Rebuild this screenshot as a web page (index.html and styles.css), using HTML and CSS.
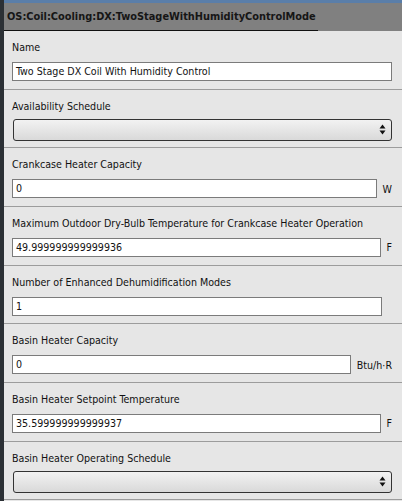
FILE: index.html
```html
<!DOCTYPE html>
<html>
<head>
<meta charset="utf-8">
<link rel="stylesheet" href="styles.css">
</head>
<body>
<div class="app">
  <div class="side"></div>
  <div class="main">
    <div class="topbar"></div>
    <div class="header"><span class="title">OS:Coil:Cooling:DX:TwoStageWithHumidityControlMode</span></div>
    <div class="field">
      <div class="label">Name</div>
      <div class="row"><div class="input">Two Stage DX Coil With Humidity Control</div></div>
    </div>
    <div class="field sel">
      <div class="label">Availability Schedule</div>
      <div class="row"><div class="select"><span class="arrows"><svg width="7" height="11" viewBox="0 0 7 11"><path d="M3.5 0.5 L6.5 4.5 L0.5 4.5 Z M0.5 6.5 L6.5 6.5 L3.5 10.5 Z" fill="#111"/></svg></span></div></div>
    </div>
    <div class="field">
      <div class="label">Crankcase Heater Capacity</div>
      <div class="row"><div class="input">0</div><span class="unit">W</span></div>
    </div>
    <div class="field">
      <div class="label">Maximum Outdoor Dry-Bulb Temperature for Crankcase Heater Operation</div>
      <div class="row"><div class="input">49.999999999999936</div><span class="unit">F</span></div>
    </div>
    <div class="field">
      <div class="label">Number of Enhanced Dehumidification Modes</div>
      <div class="row"><div class="input short">1</div></div>
    </div>
    <div class="field">
      <div class="label">Basin Heater Capacity</div>
      <div class="row"><div class="input">0</div><span class="unit">Btu/h·R</span></div>
    </div>
    <div class="field">
      <div class="label">Basin Heater Setpoint Temperature</div>
      <div class="row"><div class="input">35.599999999999937</div><span class="unit">F</span></div>
    </div>
    <div class="field sel">
      <div class="label">Basin Heater Operating Schedule</div>
      <div class="row"><div class="select"><span class="arrows"><svg width="7" height="11" viewBox="0 0 7 11"><path d="M3.5 0.5 L6.5 4.5 L0.5 4.5 Z M0.5 6.5 L6.5 6.5 L3.5 10.5 Z" fill="#111"/></svg></span></div></div>
    </div>
  </div>
</div>
</body>
</html>
```
FILE: styles.css
```css
html, body {
  margin: 0;
  padding: 0;
}
body {
  width: 402px;
  height: 501px;
  overflow: hidden;
  background: #e6e6e6;
  font-family: "DejaVu Sans Condensed", "DejaVu Sans", sans-serif;
  font-size: 10.6px;
  color: #111;
}
.app {
  display: flex;
  height: 501px;
}
.side {
  width: 4px;
  flex: none;
  background: #2b3035;
}
.main {
  flex: 1;
  display: flex;
  flex-direction: column;
  min-width: 0;
}
.main > * {
  flex: none;
}
.topbar {
  height: 3px;
  background: #5a7ea9;
}
.header {
  height: 28px;
  background: #808080;
  display: flex;
  align-items: flex-end;
}
.title {
  display: block;
  padding: 0 0 7px 3px;
  width: 311px;
  border-bottom: 1px solid #111;
  font-weight: bold;
  font-size: 10.9px;
  line-height: 13px;
  color: #161616;
  white-space: nowrap;
}
.field {
  padding: 10px 10px 7.67px 8px;
  border-bottom: 1px solid #9c9c9c;
  display: flex;
  flex-direction: column;
  gap: 8px;
}
.field:first-of-type {
  padding-bottom: 7px;
}
.field.sel {
  gap: 6px;
  padding-bottom: 6.67px;
}
.label {
  line-height: 13px;
  white-space: nowrap;
}
.row {
  display: flex;
  align-items: center;
}
.input {
  flex: 1;
  height: 17px;
  line-height: 17px;
  background: #fff;
  border: 1px solid #7b7b7b;
  padding-left: 3px;
  white-space: nowrap;
}
.input.short {
  margin-right: 10px;
}
.unit {
  margin-left: 6px;
  white-space: nowrap;
}
.select {
  flex: 1;
  height: 20px;
  margin: 0 0 0 1px;
  border: 1px solid #333;
  border-radius: 3px;
  background: linear-gradient(#f2f2f2, #d9d9d9);
  display: flex;
  align-items: center;
  justify-content: flex-end;
}
.arrows {
  display: flex;
  margin-right: 5px;
}
```
